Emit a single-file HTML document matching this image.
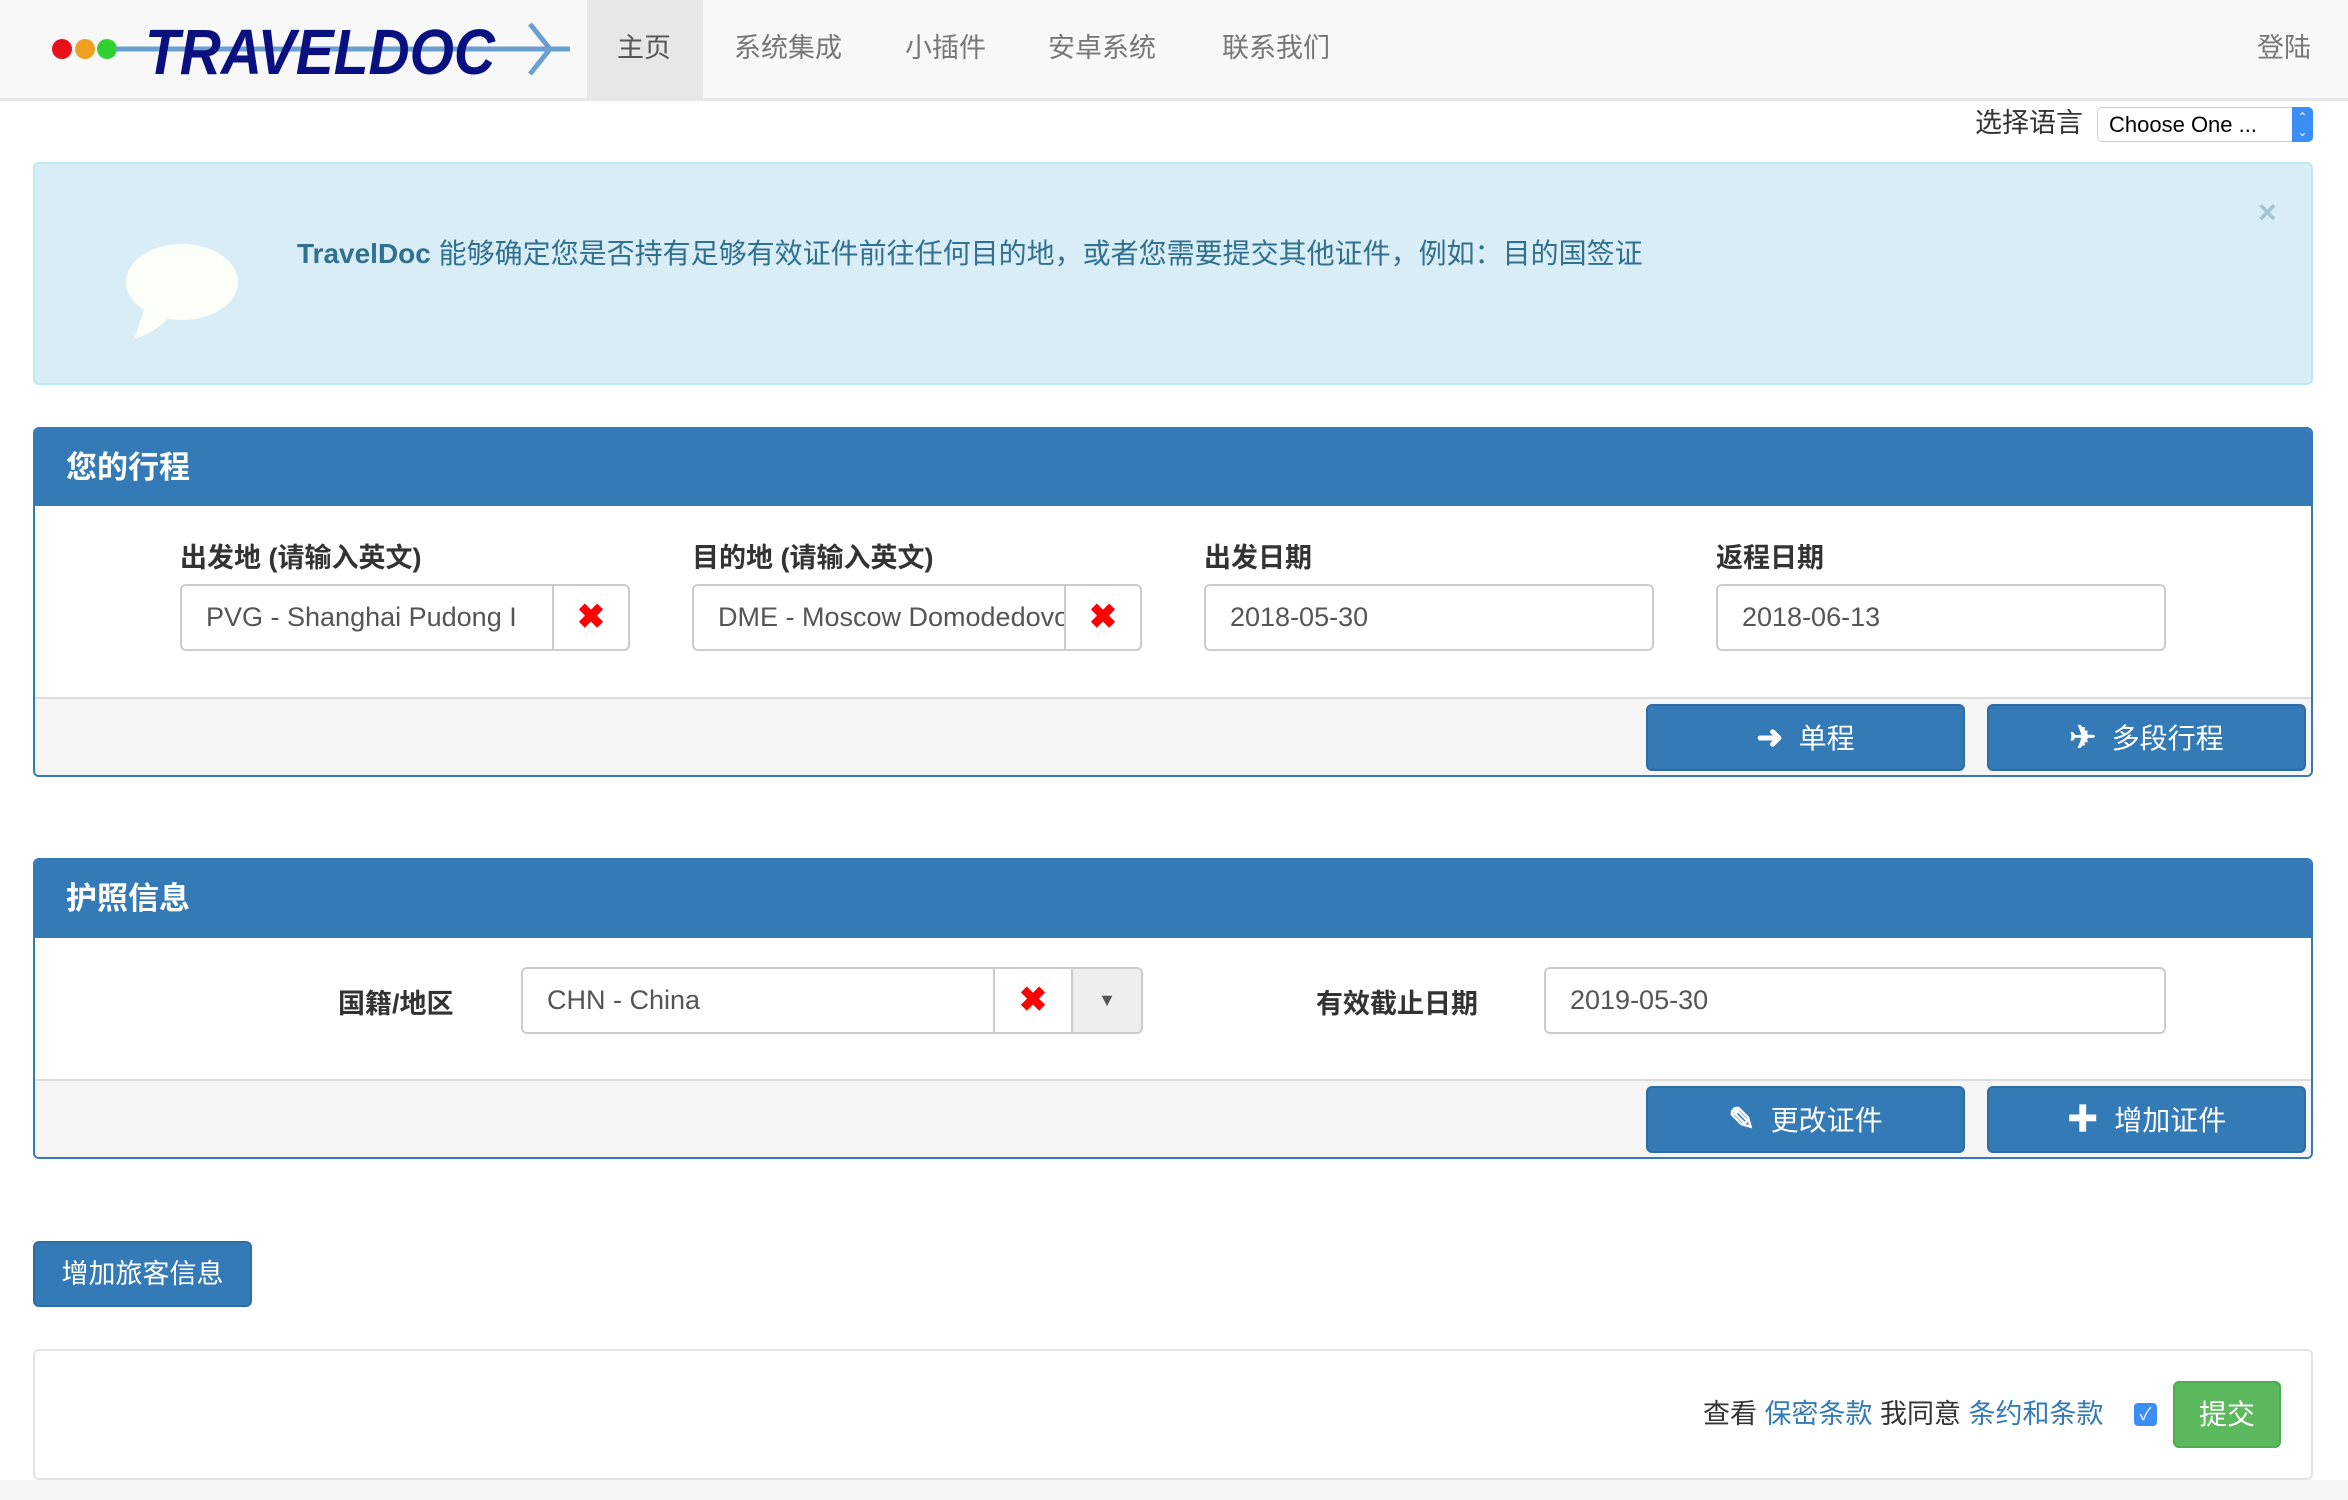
<!DOCTYPE html>
<html><head><meta charset="utf-8"><style>
*{box-sizing:border-box;margin:0;padding:0}
body{width:2348px;height:1500px;position:relative;background:#fff;font-family:"Liberation Sans","Noto Sans CJK SC",sans-serif;color:#333;overflow:hidden}
.a{position:absolute}
.nav{left:0;top:0;width:2348px;height:101px;background:#f8f8f8;border-bottom:3px solid #e7e7e7}
.ni{top:28px;font-size:27px;color:#777;line-height:40px}
.lbl{font-size:27px;font-weight:bold;color:#333}
.inp{border:2px solid #ccc;border-radius:6px;background:#fff;font-size:27px;color:#555;line-height:63px;padding-left:24px;overflow:hidden;white-space:nowrap}
.x{color:#f00;font-size:34px;font-weight:bold;text-align:center;line-height:63px;border:2px solid #ccc;background:#fff}
.panel{border:2px solid #337ab7;border-radius:6px;overflow:hidden;left:33px;width:2280px}
.ph{background:#337ab7;color:#fff;font-size:31px;font-weight:bold;padding-left:31px}
.pf{background:#f5f5f5;border-top:2px solid #ddd;position:absolute;left:0;right:0;bottom:0}
.btn{background:#337ab7;color:#fff;border:2px solid #2e6da4;border-radius:6px;font-size:28px;text-align:center}
.btn b{font-size:32px}
</style></head><body>
<div class="a nav"></div>
<svg class="a" style="left:45px;top:16px" width="530" height="62" viewBox="0 0 530 62">
<circle cx="17" cy="33" r="10" fill="#e8101a"/><circle cx="40" cy="33" r="10" fill="#f0a020"/><circle cx="62" cy="33" r="10" fill="#30d030"/>
<line x1="70" y1="33" x2="525" y2="33" stroke="#6a9fd0" stroke-width="5"/>
<text x="100" y="58" font-family="Liberation Sans" font-weight="bold" font-style="italic" font-size="64" fill="#0a1080" textLength="350" lengthAdjust="spacingAndGlyphs">TRAVELDOC</text>
<path d="M485 8 L505 33 L485 58" fill="none" stroke="#6a9fd0" stroke-width="5"/>
</svg>
<div class="a" style="left:587px;top:0;width:116px;height:98px;background:#e7e7e7"></div>
<div class="a ni" style="left:617px;color:#555">主页</div>
<div class="a ni" style="left:734px">系统集成</div>
<div class="a ni" style="left:905px">小插件</div>
<div class="a ni" style="left:1048px">安卓系统</div>
<div class="a ni" style="left:1222px">联系我们</div>
<div class="a ni" style="left:2257px">登陆</div>
<div class="a" style="left:1975px;top:104px;font-size:27px;line-height:38px;color:#333">选择语言</div>
<div class="a" style="left:2097px;top:107px;width:216px;height:35px;border:1px solid #ccc;border-radius:5px;background:#fff;font-size:22px;line-height:33px;padding-left:11px;color:#000">Choose One ...<div class="a" style="right:-1px;top:-1px;width:21px;height:35px;background:#3a8ef6;border-radius:0 5px 5px 0;color:#fff;font-size:12px;line-height:15px;text-align:center;padding-top:3px">⌃<br>⌄</div></div>
<div class="a" style="left:33px;top:162px;width:2280px;height:223px;background:#d9edf7;border:2px solid #bce8f1;border-radius:6px"></div>
<svg class="a" style="left:122px;top:242px" width="118" height="100"><ellipse cx="60" cy="40" rx="56" ry="38" fill="#fcfff8"/><path d="M25 60 L12 97 Q35 90 50 72Z" fill="#fcfff8"/></svg>
<div class="a" style="left:297px;top:234px;font-size:28px;color:#31708f;line-height:40px"><b>TravelDoc</b> 能够确定您是否持有足够有效证件前往任何目的地，或者您需要提交其他证件，例如：目的国签证</div>
<div class="a" style="left:2258px;top:194px;font-size:32px;font-weight:bold;color:#a6c4d0">×</div>

<div class="a panel" style="top:427px;height:350px">
<div class="ph" style="height:77px;line-height:77px">您的行程</div>
<div class="pf" style="height:78px"></div>
</div>
<div class="a lbl" style="left:180px;top:536px">出发地 (请输入英文)</div>
<div class="a lbl" style="left:692px;top:536px">目的地 (请输入英文)</div>
<div class="a lbl" style="left:1204px;top:536px">出发日期</div>
<div class="a lbl" style="left:1716px;top:536px">返程日期</div>
<div class="a inp" style="left:180px;top:584px;width:450px;height:67px;padding-right:90px">PVG - Shanghai Pudong I</div>
<div class="a x" style="left:552px;top:584px;width:78px;height:67px;border-radius:0 6px 6px 0">✖</div>
<div class="a inp" style="left:692px;top:584px;width:450px;height:67px;padding-right:90px">DME - Moscow Domodedovo</div>
<div class="a x" style="left:1064px;top:584px;width:78px;height:67px;border-radius:0 6px 6px 0">✖</div>
<div class="a inp" style="left:1204px;top:584px;width:450px;height:67px">2018-05-30</div>
<div class="a inp" style="left:1716px;top:584px;width:450px;height:67px">2018-06-13</div>
<div class="a btn" style="left:1646px;top:704px;width:319px;height:67px;line-height:63px"><b>➜</b>&nbsp; 单程</div>
<div class="a btn" style="left:1987px;top:704px;width:319px;height:67px;line-height:63px"><b>✈</b>&nbsp; 多段行程</div>

<div class="a panel" style="top:858px;height:301px">
<div class="ph" style="height:78px;line-height:78px">护照信息</div>
<div class="pf" style="height:78px"></div>
</div>
<div class="a lbl" style="left:338px;top:982px">国籍/地区</div>
<div class="a inp" style="left:521px;top:967px;width:474px;height:67px;border-radius:6px 0 0 6px">CHN - China</div>
<div class="a x" style="left:993px;top:967px;width:80px;height:67px">✖</div>
<div class="a x" style="left:1071px;top:967px;width:72px;height:67px;background:#eee;border-radius:0 6px 6px 0;color:#555;font-size:18px">▼</div>
<div class="a lbl" style="left:1316px;top:982px">有效截止日期</div>
<div class="a inp" style="left:1544px;top:967px;width:622px;height:67px">2019-05-30</div>
<div class="a btn" style="left:1646px;top:1086px;width:319px;height:67px;line-height:63px"><b>✎</b>&nbsp; 更改证件</div>
<div class="a btn" style="left:1987px;top:1086px;width:319px;height:67px;line-height:63px"><b>✚</b>&nbsp; 增加证件</div>

<div class="a btn" style="left:33px;top:1241px;width:219px;height:66px;line-height:62px;font-size:27px">增加旅客信息</div>
<div class="a" style="left:0;top:1480px;width:2348px;height:20px;background:#f5f5f5"></div>
<div class="a" style="left:33px;top:1349px;width:2280px;height:131px;border:2px solid #e3e3e3;border-radius:6px;background:#fff"></div>
<div class="a" style="left:1703px;top:1394px;font-size:27px;line-height:40px;color:#333">查看 <span style="color:#337ab7">保密条款</span> 我同意 <span style="color:#337ab7">条约和条款</span></div>
<div class="a" style="left:2134px;top:1403px;width:23px;height:23px;background:#3a8ef6;border-radius:4px;color:#fff;font-size:17px;text-align:center;line-height:23px">✓</div>
<div class="a" style="left:2173px;top:1381px;width:108px;height:67px;background:#5cb85c;border:2px solid #4cae4c;border-radius:6px;color:#fff;font-size:28px;text-align:center;line-height:63px">提交</div>
</body></html>
